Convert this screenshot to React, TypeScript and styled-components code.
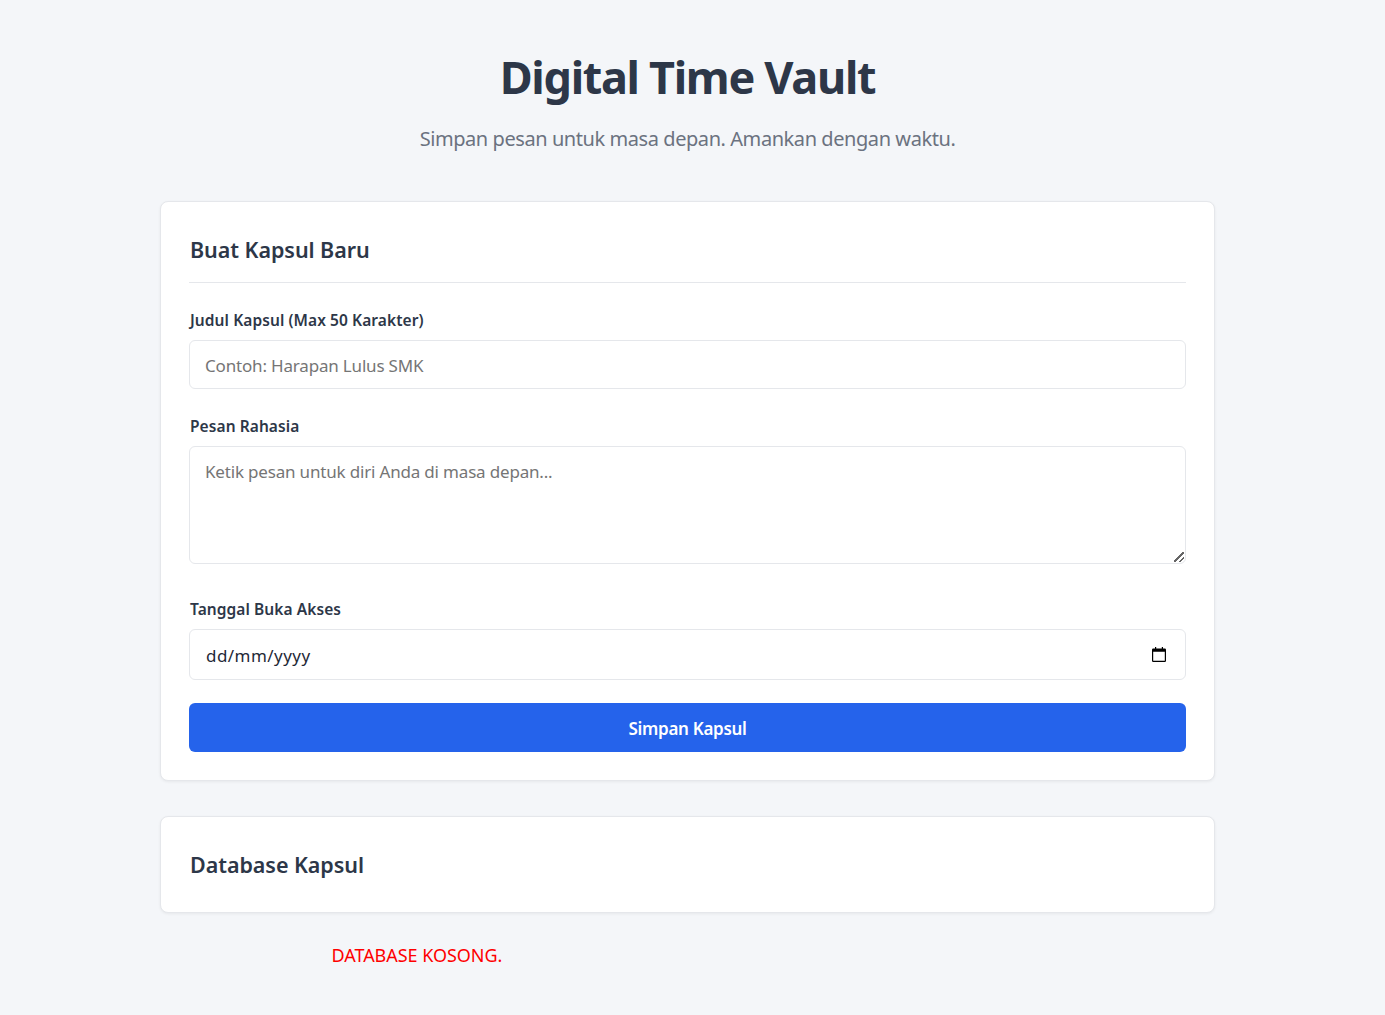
import React from "react";
import styled, { createGlobalStyle } from "styled-components";

const FONT = `"Noto Sans", "Open Sans", sans-serif`;

const Global = createGlobalStyle`
  html, body { margin: 0; padding: 0; }
  body { background: #f4f6f9; font-family: ${FONT}; color: #2d3748; }
  #root { width: 1375px; }
  * { box-sizing: border-box; }
`;

const Page = styled.main`
  width: 1055px;
  margin: 0 auto;
  padding-top: 47px;
  padding-bottom: 47px;
`;

const Header = styled.header`
  text-align: center;
  margin-bottom: 49px;
`;

const Title = styled.h1`
  margin: 0 0 18px;
  font-size: 45px;
  line-height: 60px;
  font-weight: 700;
  letter-spacing: -1.32px;
  color: #2d3748;
`;

const Subtitle = styled.p`
  margin: 0;
  font-size: 20px;
  line-height: 27px;
  letter-spacing: -0.43px;
  color: #6b7280;
`;

const Card = styled.section<{ $gap?: number; $bottom?: number }>`
  background: #ffffff;
  border: 1px solid #e5e7eb;
  border-radius: 8px;
  box-shadow: 0 1px 3px rgba(0, 0, 0, 0.06);
  padding: 28px 28px ${(p) => p.$bottom ?? 28}px;
  margin-bottom: ${(p) => p.$gap ?? 0}px;
`;

const SectionTitle = styled.h2<{ $rule?: boolean }>`
  margin: 0;
  padding-left: 1px;
  padding-bottom: ${(p) => (p.$rule ? 12 : 0)}px;
  font-size: 21.5px;
  line-height: 40px;
  font-weight: 600;
  letter-spacing: -0.05px;
  color: #2d3748;
  border-bottom: ${(p) => (p.$rule ? "1px solid #e5e7eb" : "none")};
`;

const Field = styled.div<{ $top: number }>`
  margin-top: ${(p) => p.$top}px;
`;

const Label = styled.label`
  display: block;
  padding-left: 1px;
  font-size: 15.5px;
  line-height: 21px;
  font-weight: 600;
  letter-spacing: 0.08px;
  color: #2d3748;
  margin-bottom: 9px;
`;

const inputText = `
  width: 100%;
  border: 1px solid #e5e7eb;
  border-radius: 6px;
  background: #ffffff;
  font-family: ${FONT};
  font-size: 17px;
  letter-spacing: -0.18px;
  color: #2d3748;
  outline: none;
  &::placeholder { color: #757575; opacity: 1; }
`;

const TextInput = styled.input`
  ${inputText}
  display: block;
  height: 49px;
  padding: 2px 15px 0;
`;

const TextArea = styled.textarea`
  ${inputText}
  display: block;
  height: 118px;
  padding: 13px 15px;
  line-height: 24px;
  resize: vertical;
  &::-webkit-resizer {
    background: linear-gradient(
        135deg,
        transparent 44%,
        #666666 44%,
        #666666 55%,
        transparent 55%,
        transparent 70%,
        #666666 70%,
        #666666 80%,
        transparent 80%
      )
      no-repeat right 1.5px bottom 1px / 10px 10px;
  }
`;

const DateField = styled.div`
  ${inputText}
  display: flex;
  align-items: center;
  justify-content: space-between;
  height: 51px;
  padding: 0 19px 0 16px;
  color: #1f2937;
`;

const DateText = styled.span`
  padding-top: 2px;
  letter-spacing: 0.45px;
`;

const CalendarIcon = styled.svg`
  display: block;
  width: 14px;
  height: 15px;
  flex: none;
`;

const Submit = styled.button`
  display: block;
  width: 100%;
  height: 49px;
  margin-top: 23px;
  padding: 2px 0 0;
  border: 0;
  border-radius: 6px;
  background: #2563eb;
  color: #ffffff;
  font-family: ${FONT};
  font-size: 17px;
  font-weight: 600;
  letter-spacing: -0.3px;
`;

const EmptyNote = styled.p`
  margin: 30px 0 0 171.5px;
  font-size: 18px;
  line-height: 24px;
  letter-spacing: -0.04px;
  color: #ff0000;
`;

export default function App() {
  return (
    <>
      <Global />
      <Page>
        <Header>
          <Title>Digital Time Vault</Title>
          <Subtitle>Simpan pesan untuk masa depan. Amankan dengan waktu.</Subtitle>
        </Header>
        <Card $gap={35}>
          <SectionTitle $rule>Buat Kapsul Baru</SectionTitle>
          <Field $top={27}>
            <Label htmlFor="judul">Judul Kapsul (Max 50 Karakter)</Label>
            <TextInput id="judul" placeholder="Contoh: Harapan Lulus SMK" />
          </Field>
          <Field $top={27}>
            <Label htmlFor="pesan">Pesan Rahasia</Label>
            <TextArea id="pesan" placeholder="Ketik pesan untuk diri Anda di masa depan..." />
          </Field>
          <Field $top={35}>
            <Label>Tanggal Buka Akses</Label>
            <DateField>
              <DateText>dd/mm/yyyy</DateText>
              <CalendarIcon viewBox="0 0 14 15" aria-hidden="true">
                <path d="M1.2 1.5H3V0h1.2v1.5h5.6V0H11v1.5h1.8A1.2 1.2 0 0 1 14 2.7v11.1a1.2 1.2 0 0 1-1.2 1.2H1.2A1.2 1.2 0 0 1 0 13.8V2.7a1.2 1.2 0 0 1 1.2-1.2Zm0 3.3v9h11.6v-9H1.2Z" fill="#000" fillRule="evenodd" />
              </CalendarIcon>
            </DateField>
          </Field>
          <Submit type="button">Simpan Kapsul</Submit>
        </Card>
        <Card $bottom={27}>
          <SectionTitle>Database Kapsul</SectionTitle>
        </Card>
        <EmptyNote>DATABASE KOSONG.</EmptyNote>
      </Page>
    </>
  );
}
